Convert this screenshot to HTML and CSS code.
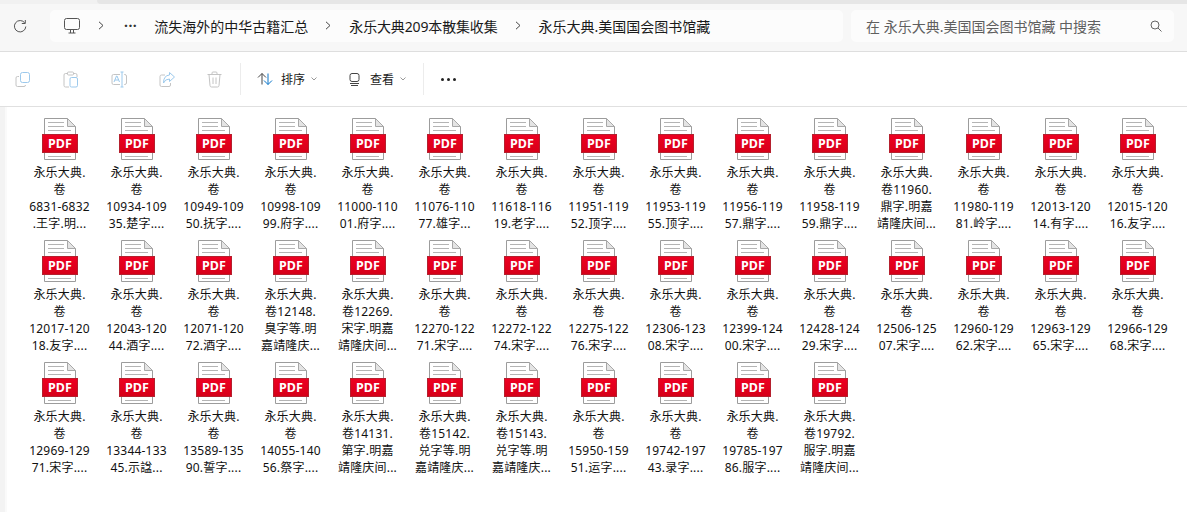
FILE: index.html
```html
<!DOCTYPE html>
<html lang="zh">
<head>
<meta charset="utf-8">
<title>永乐大典.美国国会图书馆藏</title>
<link rel="stylesheet" href="styles.css">
</head>
<body>
<svg class="defs" width="0" height="0" aria-hidden="true">
  <defs>
    <linearGradient id="band" x1="0" y1="0" x2="0" y2="1">
      <stop offset="0" stop-color="#ee0022"/>
      <stop offset="1" stop-color="#d60018"/>
    </linearGradient>
    <symbol id="pdf" viewBox="0 0 36 43">
      <path d="M2.5 .5H25.5L33.5 8.5V41.5H2.5Z" fill="#fff" stroke="#9c9c9c"/>
      <path d="M25.5 .5V8.5H33.5Z" fill="#e4e4e4" stroke="#a8a8a8"/>
      <path d="M6 4.5H22M6 8.5H22M6 12.5H29M6 38.5H29" stroke="#b4b4b4" fill="none"/>
      <rect x=".5" y="16.5" width="35" height="18" fill="url(#band)" stroke="#b5202e"/>
      <text x="18" y="30" text-anchor="middle" class="pdf-label">PDF</text>
    </symbol>
  </defs>
</svg>
<div class="tabstrip"><div class="tabstrip-tab"></div></div>
<header class="addressbar">
  <svg class="refresh" width="14" height="14" viewBox="0 0 14 14" fill="none" stroke="#555"><path d="M11.8 4A5.7 5.700 0 1 0 12.800 7.500"/><path d="M12.300 1V4.500H8.800"/></svg>
  <nav class="crumbs">
    <svg class="monitor" width="16" height="16" viewBox="0 0 16 16" fill="none" stroke="#555"><rect x=".5" y=".5" width="15" height="11" rx="2"/><path d="M4.500 15H11.500M6.500 12V15M9.500 12V15"/></svg>
    <svg class="chev" width="6" height="9" viewBox="0 0 6 9" fill="none" stroke="#444"><path d="M1 .8L5 4.500L1 8.200"/></svg>
    <span class="crumb-dots">···</span>
    <span class="crumb">流失海外的中华古籍汇总</span>
    <svg class="chev" width="6" height="9" viewBox="0 0 6 9" fill="none" stroke="#444"><path d="M1 .8L5 4.500L1 8.200"/></svg>
    <span class="crumb crumb-tight">永乐大典209本散集收集</span>
    <svg class="chev" width="6" height="9" viewBox="0 0 6 9" fill="none" stroke="#444"><path d="M1 .8L5 4.500L1 8.200"/></svg>
    <span class="crumb">永乐大典.美国国会图书馆藏</span>
  </nav>
  <div class="search">
    <span class="search-text">在 永乐大典.美国国会图书馆藏 中搜索</span>
    <svg width="12" height="12" viewBox="0 0 12 12" fill="none" stroke="#666"><circle cx="5" cy="5" r="4"/><path d="M8 8L11.500 11.500"/></svg>
  </div>
</header>
<div class="toolbar">
  <div class="tool-group">
    <svg width="16" height="17" viewBox="0 0 16 17" fill="none"><path d="M4 5.500H2.500Q1 5.500 1 7V14Q1 15.500 2.500 15.500H9Q10.500 15.500 10.500 14" stroke="#c4c4c4"/><rect x="5.500" y="1.500" width="9" height="10" rx="2" stroke="#9cc9ec"/></svg>
    <svg width="16" height="17" viewBox="0 0 16 17" fill="none"><path d="M4 2.500H2.500Q1 2.500 1 4V14.500Q1 16 2.500 16H6M11 2.500H12.500Q14 2.500 14 4V6" stroke="#c4c4c4"/><rect x="4.500" y="1" width="6" height="3" rx="1" stroke="#c4c4c4"/><rect x="7" y="6.500" width="7.500" height="9.500" rx="1.500" stroke="#9cc9ec"/></svg>
    <svg width="16" height="17" viewBox="0 0 16 17" fill="none"><path d="M9 3.500H2.500Q1 3.500 1 5V12Q1 13.500 2.500 13.500H9M13 3.500H13.500Q15.500 3.500 15.500 5V12Q15.500 13.500 13.500 13.500H13" stroke="#c4c4c4"/><path d="M3 11L5.500 5H6L8.500 11M4 9H7.500" stroke="#9cc9ec"/><path d="M11 1V16M9.500 1H12.500M9.500 16H12.500" stroke="#9cc9ec"/></svg>
    <svg width="16" height="17" viewBox="0 0 16 17" fill="none"><path d="M6 4H2.500Q1 4 1 5.500V14Q1 15.500 2.500 15.500H10Q11.500 15.500 11.500 14V12" stroke="#c4c4c4"/><path d="M10.500 1.500L15.500 6L10.500 10.500V8Q6 8 4.500 12Q4.500 4.500 10.500 4Z" stroke="#9cc9ec"/></svg>
    <svg width="15" height="17" viewBox="0 0 15 17" fill="none" stroke="#c4c4c4"><path d="M.5 3.500H14.500M5 3.500V2Q5 1 6 1H9Q10 1 10 2V3.500M2 3.500L3 14.500Q3.100 16 4.500 16H10.500Q11.900 16 12 14.500L13 3.500M6 6.500V13M9 6.500V13"/></svg>
  </div>
  <span class="divider divider-first"></span>
  <button class="tool tool-sort">
    <svg width="16" height="12" viewBox="0 0 16 12" fill="none"><path d="M5 11.500V.5M1 4.500L5 .5L9 4.500" stroke="#444"/><path d="M11 .5V11.500M7 7.500L11 11.500L15 7.500" stroke="#0a74c8"/></svg>
    <span class="tool-label">排序</span>
    <svg width="6" height="4" viewBox="0 0 6 4" fill="none" stroke="#999"><path d="M.5 .5L3 3L5.500 .5"/></svg>
  </button>
  <button class="tool tool-view">
    <svg width="11" height="13" viewBox="0 0 11 13" fill="none"><rect x="1" y=".5" width="9" height="8" rx="2" stroke="#444"/><path d="M1 10.500H10M2 12.500H9" stroke="#444"/></svg>
    <span class="tool-label">查看</span>
    <svg width="6" height="4" viewBox="0 0 6 4" fill="none" stroke="#999"><path d="M.5 .5L3 3L5.500 .5"/></svg>
  </button>
  <span class="divider divider-last"></span>
  <span class="more"><i></i><i></i><i></i></span>
</div>
<main class="content">
  <div class="files">
    <div class="file"><svg class="file-icon"><use href="#pdf"/></svg><p>永乐大典.<br>卷<br>6831-6832<br>.王字.明...</p></div>
    <div class="file"><svg class="file-icon"><use href="#pdf"/></svg><p>永乐大典.<br>卷<br>10934-109<br>35.楚字....</p></div>
    <div class="file"><svg class="file-icon"><use href="#pdf"/></svg><p>永乐大典.<br>卷<br>10949-109<br>50.抚字....</p></div>
    <div class="file"><svg class="file-icon"><use href="#pdf"/></svg><p>永乐大典.<br>卷<br>10998-109<br>99.府字....</p></div>
    <div class="file"><svg class="file-icon"><use href="#pdf"/></svg><p>永乐大典.<br>卷<br>11000-110<br>01.府字....</p></div>
    <div class="file"><svg class="file-icon"><use href="#pdf"/></svg><p>永乐大典.<br>卷<br>11076-110<br>77.雄字...</p></div>
    <div class="file"><svg class="file-icon"><use href="#pdf"/></svg><p>永乐大典.<br>卷<br>11618-116<br>19.老字....</p></div>
    <div class="file"><svg class="file-icon"><use href="#pdf"/></svg><p>永乐大典.<br>卷<br>11951-119<br>52.顶字....</p></div>
    <div class="file"><svg class="file-icon"><use href="#pdf"/></svg><p>永乐大典.<br>卷<br>11953-119<br>55.顶字....</p></div>
    <div class="file"><svg class="file-icon"><use href="#pdf"/></svg><p>永乐大典.<br>卷<br>11956-119<br>57.鼎字....</p></div>
    <div class="file"><svg class="file-icon"><use href="#pdf"/></svg><p>永乐大典.<br>卷<br>11958-119<br>59.鼎字....</p></div>
    <div class="file"><svg class="file-icon"><use href="#pdf"/></svg><p>永乐大典.<br>卷11960.<br>鼎字.明嘉<br>靖隆庆间...</p></div>
    <div class="file"><svg class="file-icon"><use href="#pdf"/></svg><p>永乐大典.<br>卷<br>11980-119<br>81.岭字....</p></div>
    <div class="file"><svg class="file-icon"><use href="#pdf"/></svg><p>永乐大典.<br>卷<br>12013-120<br>14.有字....</p></div>
    <div class="file"><svg class="file-icon"><use href="#pdf"/></svg><p>永乐大典.<br>卷<br>12015-120<br>16.友字....</p></div>
    <div class="file"><svg class="file-icon"><use href="#pdf"/></svg><p>永乐大典.<br>卷<br>12017-120<br>18.友字....</p></div>
    <div class="file"><svg class="file-icon"><use href="#pdf"/></svg><p>永乐大典.<br>卷<br>12043-120<br>44.酒字....</p></div>
    <div class="file"><svg class="file-icon"><use href="#pdf"/></svg><p>永乐大典.<br>卷<br>12071-120<br>72.酒字....</p></div>
    <div class="file"><svg class="file-icon"><use href="#pdf"/></svg><p>永乐大典.<br>卷12148.<br>臭字等.明<br>嘉靖隆庆...</p></div>
    <div class="file"><svg class="file-icon"><use href="#pdf"/></svg><p>永乐大典.<br>卷12269.<br>宋字.明嘉<br>靖隆庆间...</p></div>
    <div class="file"><svg class="file-icon"><use href="#pdf"/></svg><p>永乐大典.<br>卷<br>12270-122<br>71.宋字....</p></div>
    <div class="file"><svg class="file-icon"><use href="#pdf"/></svg><p>永乐大典.<br>卷<br>12272-122<br>74.宋字....</p></div>
    <div class="file"><svg class="file-icon"><use href="#pdf"/></svg><p>永乐大典.<br>卷<br>12275-122<br>76.宋字....</p></div>
    <div class="file"><svg class="file-icon"><use href="#pdf"/></svg><p>永乐大典.<br>卷<br>12306-123<br>08.宋字....</p></div>
    <div class="file"><svg class="file-icon"><use href="#pdf"/></svg><p>永乐大典.<br>卷<br>12399-124<br>00.宋字....</p></div>
    <div class="file"><svg class="file-icon"><use href="#pdf"/></svg><p>永乐大典.<br>卷<br>12428-124<br>29.宋字....</p></div>
    <div class="file"><svg class="file-icon"><use href="#pdf"/></svg><p>永乐大典.<br>卷<br>12506-125<br>07.宋字....</p></div>
    <div class="file"><svg class="file-icon"><use href="#pdf"/></svg><p>永乐大典.<br>卷<br>12960-129<br>62.宋字....</p></div>
    <div class="file"><svg class="file-icon"><use href="#pdf"/></svg><p>永乐大典.<br>卷<br>12963-129<br>65.宋字....</p></div>
    <div class="file"><svg class="file-icon"><use href="#pdf"/></svg><p>永乐大典.<br>卷<br>12966-129<br>68.宋字....</p></div>
    <div class="file"><svg class="file-icon"><use href="#pdf"/></svg><p>永乐大典.<br>卷<br>12969-129<br>71.宋字....</p></div>
    <div class="file"><svg class="file-icon"><use href="#pdf"/></svg><p>永乐大典.<br>卷<br>13344-133<br>45.示諡...</p></div>
    <div class="file"><svg class="file-icon"><use href="#pdf"/></svg><p>永乐大典.<br>卷<br>13589-135<br>90.誓字....</p></div>
    <div class="file"><svg class="file-icon"><use href="#pdf"/></svg><p>永乐大典.<br>卷<br>14055-140<br>56.祭字....</p></div>
    <div class="file"><svg class="file-icon"><use href="#pdf"/></svg><p>永乐大典.<br>卷14131.<br>第字.明嘉<br>靖隆庆间...</p></div>
    <div class="file"><svg class="file-icon"><use href="#pdf"/></svg><p>永乐大典.<br>卷15142.<br>兑字等.明<br>嘉靖隆庆...</p></div>
    <div class="file"><svg class="file-icon"><use href="#pdf"/></svg><p>永乐大典.<br>卷15143.<br>兑字等.明<br>嘉靖隆庆...</p></div>
    <div class="file"><svg class="file-icon"><use href="#pdf"/></svg><p>永乐大典.<br>卷<br>15950-159<br>51.运字....</p></div>
    <div class="file"><svg class="file-icon"><use href="#pdf"/></svg><p>永乐大典.<br>卷<br>19742-197<br>43.录字....</p></div>
    <div class="file"><svg class="file-icon"><use href="#pdf"/></svg><p>永乐大典.<br>卷<br>19785-197<br>86.服字....</p></div>
    <div class="file"><svg class="file-icon"><use href="#pdf"/></svg><p>永乐大典.<br>卷19792.<br>服字.明嘉<br>靖隆庆间...</p></div>
  </div>
</main>
</body>
</html>
```
FILE: styles.css
```css
* { box-sizing: border-box; }
html, body { margin: 0; height: 100%; }
body {
  height: 512px;
  overflow: hidden;
  background: #fff;
  color: #111;
  font-family: "Noto Sans", "Noto Sans CJK SC", sans-serif;
  display: flex;
  flex-direction: column;
}
.defs { position: absolute; }
.pdf-label {
  font-family: "Noto Sans", sans-serif;
  font-weight: 700;
  font-size: 12.5px;
  fill: #fff;
}
.tabstrip { height: 4px; background: #f1f1f1; padding-left: 97px; flex: none; }
.tabstrip-tab { height: 4px; background: #e6e6e6; border-bottom-left-radius: 4px; }
.addressbar {
  flex: none;
  height: 48px;
  background: #f7f7f7;
  border-bottom: 1px solid #dedede;
  display: flex;
  align-items: center;
  padding: 0 13px 4px 13px;
}
.refresh { flex: none; margin-right: 23px; }
.crumbs {
  width: 793px;
  height: 32px;
  background: #fcfcfc;
  border-radius: 5px;
  display: flex;
  align-items: center;
  padding-left: 14px;
  font-size: 14px;
  flex: none;
}
.monitor { margin-right: 18px; }
.crumb-dots { margin: 0 17px 0 20px; font-size: 14px; font-weight: 700; letter-spacing: .5px; color: #333; }
.crumb { color: #1a1a1a; white-space: nowrap; }
.crumb-tight { letter-spacing: -.15px; }
.crumb + .chev { margin: 0 18px 0 17px; }
.search {
  margin-left: 8px;
  width: 323px;
  height: 32px;
  background: #fcfcfc;
  border-radius: 5px;
  display: flex;
  align-items: center;
  justify-content: space-between;
  padding: 0 12px 0 15px;
  font-size: 14px;
  color: #5f5f5f;
  flex: none;
}
.toolbar {
  flex: none;
  height: 55px;
  background: #fff;
  border-bottom: 1px solid #e0e0e0;
  display: flex;
  align-items: center;
  padding-left: 15px;
  font-size: 12px;
}
.tool-group { display: flex; gap: 32px; align-items: center; }
.divider { width: 1px; height: 32px; background: #ececec; flex: none; }
.divider-first { margin-left: 18px; }
.divider-last { margin-left: 17px; }
.tool {
  all: unset;
  display: flex;
  align-items: center;
  font-size: 12px;
  color: #1a1a1a;
}
.tool-sort { margin-left: 16px; }
.tool-view { margin-left: 32px; }
.tool-label { margin: 0 6px 0 8px; }
.tool-view .tool-label { margin: 0 6px 0 10px; }
.more { display: flex; gap: 3px; margin-left: 17px; }
.more i { width: 3px; height: 3px; border-radius: 50%; background: #222; }
.content {
  flex: 1;
  border-left: 5px solid #f3f3f3;
  box-shadow: inset 2px 0 0 #fafafa;
  padding: 11px 0 0 16px;
  overflow: hidden;
}
.files {
  display: grid;
  grid-template-columns: repeat(15, 77px);
  row-gap: 8px;
}
.file { text-align: center; }
.file-icon { display: block; width: 36px; height: 43px; margin: 0 auto 3px; }
.file p {
  margin: 0;
  font-size: 12px;
  line-height: 17px;
  letter-spacing: .2px;
  color: #111;
  white-space: nowrap;
}
```
